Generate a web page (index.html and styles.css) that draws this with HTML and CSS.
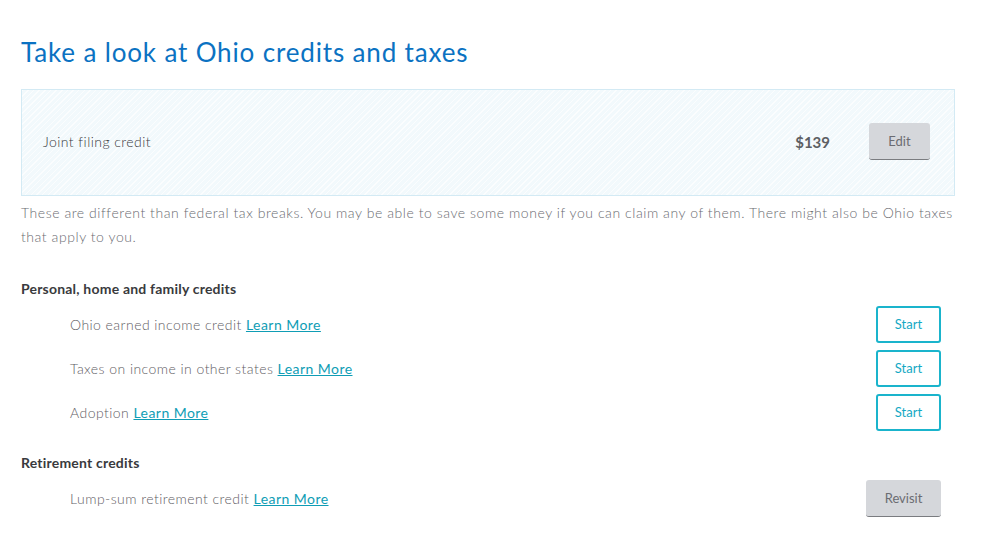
FILE: index.html
```html
<!DOCTYPE html>
<html lang="en">
<head>
  <meta charset="UTF-8" />
  <title>Ohio credits and taxes</title>
  <link rel="stylesheet" href="styles.css">
</head>
<body>
  <main class="page">
    <h1 class="page-title">Take a look at Ohio credits and taxes</h1>

    <div class="summary-box">
      <span class="summary-label">Joint filing credit</span>
      <span class="summary-amount">$139</span>
      <button class="btn btn-grey">Edit</button>
    </div>

    <p class="intro">These are different than federal tax breaks. You may be able to save some money if you can claim any of them. There might also be Ohio taxes that apply to you.</p>

    <section class="group">
      <h2 class="group-title">Personal, home and family credits</h2>
      <div class="item">
        <span class="item-label">Ohio earned income credit <a href="#">Learn More</a></span>
        <button class="btn btn-outline">Start</button>
      </div>
      <div class="item">
        <span class="item-label">Taxes on income in other states <a href="#">Learn More</a></span>
        <button class="btn btn-outline">Start</button>
      </div>
      <div class="item">
        <span class="item-label">Adoption <a href="#">Learn More</a></span>
        <button class="btn btn-outline">Start</button>
      </div>
    </section>

    <section class="group">
      <h2 class="group-title">Retirement credits</h2>
      <div class="item">
        <span class="item-label">Lump-sum retirement credit <a href="#">Learn More</a></span>
        <button class="btn btn-grey btn-wide">Revisit</button>
      </div>
    </section>
  </main>
</body>
</html>
```

FILE: styles.css
```css
* { margin: 0; padding: 0; box-sizing: border-box; }
body {
  font-family: 'Lato', 'Liberation Sans', sans-serif;
  font-weight: 300;
  color: #393a3d;
  background: #fff;
}
.page {
  width: 934px;
  margin-left: 21px;
  padding-top: 35px;
}
.page-title {
  font-size: 26px;
  font-weight: 400;
  letter-spacing: 0.85px;
  color: #0b72c2;
  line-height: 34px;
  margin-bottom: 20px;
}
.summary-box {
  display: flex;
  align-items: center;
  height: 107px;
  padding: 0 24px 2px 21px;
  border: 1px solid #d3eaf4;
  background-color: #f2f9fc;
  background-image: repeating-linear-gradient(135deg, rgba(255,255,255,0.7) 0 1px, transparent 1px 4px);
}
.summary-label {
  flex: 1;
  font-size: 14px;
  letter-spacing: 0.45px;
  color: #393a3d;
}
.summary-amount {
  font-weight: 700;
  font-size: 15px;
  color: #5d5f63;
  margin-right: 39px;
}
.btn {
  font-family: inherit;
  font-size: 13px;
  font-weight: 400;
  height: 37px;
  border-radius: 3px;
  cursor: pointer;
}
.btn-grey {
  width: 61px;
  background: #d5d7db;
  color: #6b6c72;
  border: none;
  border-bottom: 1px solid #7a7c80;
}
.btn-wide { width: 75px; }
.btn-outline {
  width: 65px;
  background: #fff;
  color: #14a8c4;
  border: 2px solid #1ab4cc;
}
.intro {
  margin-top: 5px;
  font-size: 14px;
  letter-spacing: 0.56px;
  line-height: 24px;
  color: #6b6c72;
}
.group { margin-top: 30px; }
.group + .group { margin-top: 19px; }
.group-title {
  font-size: 14px;
  font-weight: 700;
  letter-spacing: 0.2px;
  color: #393a3d;
  line-height: 20px;
  margin-bottom: 3px;
}
.item {
  display: flex;
  align-items: center;
  justify-content: space-between;
  padding: 0 14px 0 49px;
  height: 44px;
}
.item-label {
  font-size: 14px;
  letter-spacing: 0.45px;
  color: #5f6065;
}
.item-label a {
  color: #0f9db5;
  font-weight: 400;
}
```
